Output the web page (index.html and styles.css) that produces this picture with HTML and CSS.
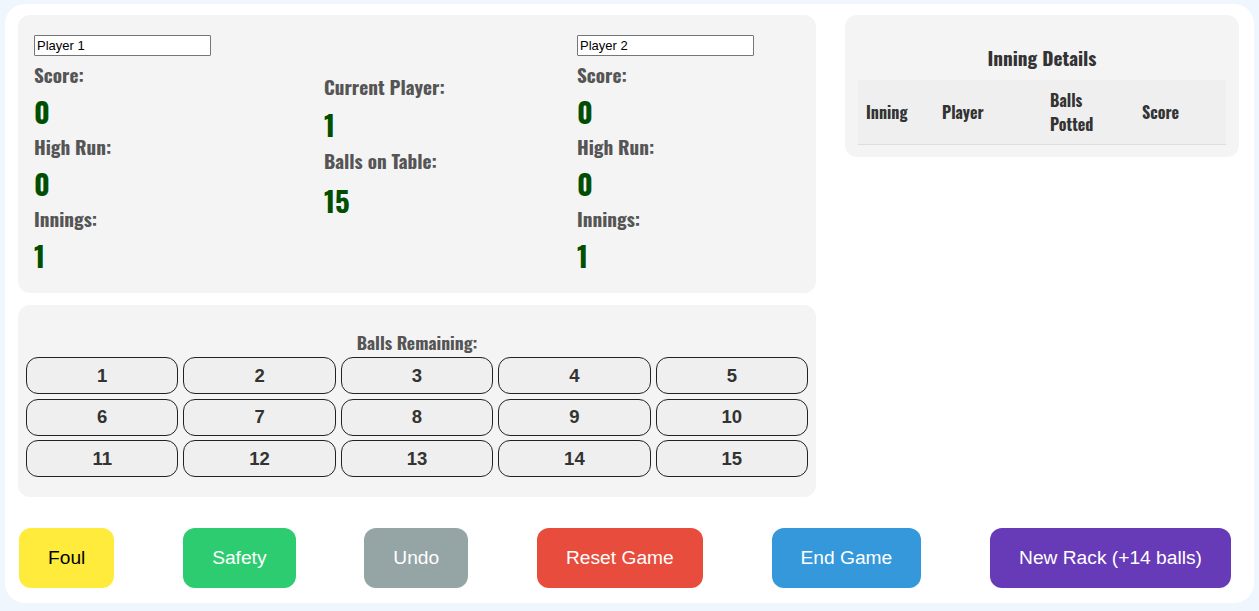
FILE: index.html
```html
<!DOCTYPE html>
<html>
<head>
<meta charset="utf-8">
<link rel="stylesheet" href="styles.css">
</head>
<body>
<div class="app">
  <div class="main">
    <div class="left">
      <div class="panel board">
        <div class="col col-p1">
          <input class="name" type="text" value="Player 1">
          <div class="label">Score:</div>
          <div class="value">0</div>
          <div class="label">High Run:</div>
          <div class="value">0</div>
          <div class="label">Innings:</div>
          <div class="value">1</div>
        </div>
        <div class="col col-mid">
          <div class="label">Current Player:</div>
          <div class="value">1</div>
          <div class="label">Balls on Table:</div>
          <div class="value last">15</div>
        </div>
        <div class="col col-p2">
          <input class="name" type="text" value="Player 2">
          <div class="label">Score:</div>
          <div class="value">0</div>
          <div class="label">High Run:</div>
          <div class="value">0</div>
          <div class="label">Innings:</div>
          <div class="value">1</div>
        </div>
      </div>
      <div class="panel balls">
        <div class="balls-title">Balls Remaining:</div>
        <div class="ball-grid">
          <button class="ball">1</button><button class="ball">2</button><button class="ball">3</button><button class="ball">4</button><button class="ball">5</button>
          <button class="ball">6</button><button class="ball">7</button><button class="ball">8</button><button class="ball">9</button><button class="ball">10</button>
          <button class="ball">11</button><button class="ball">12</button><button class="ball">13</button><button class="ball">14</button><button class="ball">15</button>
        </div>
      </div>
    </div>
    <div class="panel details">
      <div class="details-title">Inning Details</div>
      <table class="inn-table">
        <thead>
          <tr><th class="c1">Inning</th><th class="c2">Player</th><th class="c3">Balls Potted</th><th class="c4">Score</th></tr>
        </thead>
      </table>
    </div>
  </div>
  <div class="actions">
    <button class="act foul">Foul</button>
    <button class="act safety">Safety</button>
    <button class="act undo">Undo</button>
    <button class="act reset">Reset Game</button>
    <button class="act end">End Game</button>
    <button class="act rack">New Rack (+14 balls)</button>
  </div>
</div>
</body>
</html>
```
FILE: styles.css
```css
html, body {
  margin: 0;
  padding: 0;
}
body {
  background: #eff6fd;
  width: 1259px;
  height: 611px;
  overflow: hidden;
  font-family: "Liberation Sans", Arial, sans-serif;
}
.app {
  box-sizing: border-box;
  margin: 4px 5px 0 5px;
  width: 1249px;
  height: 599px;
  background: #ffffff;
  border-radius: 20px;
  padding: 11px 15px 15px 13px;
}
.main {
  display: grid;
  grid-template-columns: 798px 394px;
  column-gap: 29px;
  align-items: start;
}
.left {
  display: flex;
  flex-direction: column;
  gap: 12px;
}
.panel {
  background: #f4f4f4;
  border-radius: 12px;
}
.label, .value, .balls-title, .details-title, .inn-table th {
  font-family: "Oswald", "Liberation Sans Narrow", "Roboto Condensed", "DejaVu Sans Condensed", sans-serif;
  font-weight: bold;
}
.board {
  height: 278px;
  box-sizing: border-box;
  padding: 20px 16px 0 16px;
  display: grid;
  grid-template-columns: 290px 253px 1fr;
  align-items: start;
}
.col-mid {
  margin-top: 38px;
}
.name {
  display: block;
  box-sizing: border-box;
  width: 177px;
  height: 21px;
  margin: 0 0 5px 0;
  padding: 1px 2px;
  border: 1px solid #767676;
  border-radius: 1px;
  font-family: "Liberation Sans", Arial, sans-serif;
  font-size: 13px;
  color: #000;
  background: #fff;
}
.label {
  font-size: 19.2px;
  line-height: 28px;
  color: #555555;
}
.value {
  font-size: 28.8px;
  line-height: 44px;
  color: #004f00;
}
.col-mid .value {
  line-height: 46px;
}
.col-mid .value.last {
  line-height: 50px;
}
.balls {
  height: 192px;
  box-sizing: border-box;
  padding: 25px 8px 0 8px;
}
.balls-title {
  text-align: center;
  font-size: 17.6px;
  line-height: 24px;
  color: #555555;
  margin-bottom: 3px;
}
.ball-grid {
  display: grid;
  grid-template-columns: repeat(5, 1fr);
  column-gap: 5px;
  row-gap: 4.5px;
}
.ball {
  height: 37px;
  border: 1px solid #222;
  border-radius: 12px;
  background: #efefef;
  color: #333;
  font-family: "Liberation Sans", Arial, sans-serif;
  font-weight: bold;
  font-size: 18.5px;
  padding: 0;
}
.details {
  box-sizing: border-box;
  height: 142px;
  padding: 29px 13px 0 13px;
}
.details-title {
  text-align: center;
  font-size: 19.2px;
  line-height: 28px;
  color: #333333;
  margin-bottom: 8px;
}
.inn-table {
  width: 100%;
  border-collapse: collapse;
}
.inn-table th {
  background: #efefef;
  border-bottom: 1px solid #dddddd;
  text-align: left;
  font-size: 16px;
  line-height: 24px;
  color: #333333;
  padding: 8px 8px;
  vertical-align: middle;
}
.inn-table .c1 { width: 60px; }
.inn-table .c2 { width: 92px; }
.inn-table .c3 { width: 76px; }
.inn-table .c4 { width: auto; }
.actions {
  display: flex;
  justify-content: space-between;
  margin-top: 31px;
  padding: 0 8px 0 1px;
}
.act {
  height: 60px;
  border: none;
  border-radius: 12px;
  padding: 0 29px;
  font-family: "Liberation Sans", Arial, sans-serif;
  font-size: 19.2px;
  color: #ffffff;
}
.foul { background: #ffeb3b; color: #000; }
.safety { background: #2ecc71; }
.undo { background: #95a5a6; }
.reset { background: #e74c3c; }
.end { background: #3498db; }
.rack { background: #673ab7; }
```
